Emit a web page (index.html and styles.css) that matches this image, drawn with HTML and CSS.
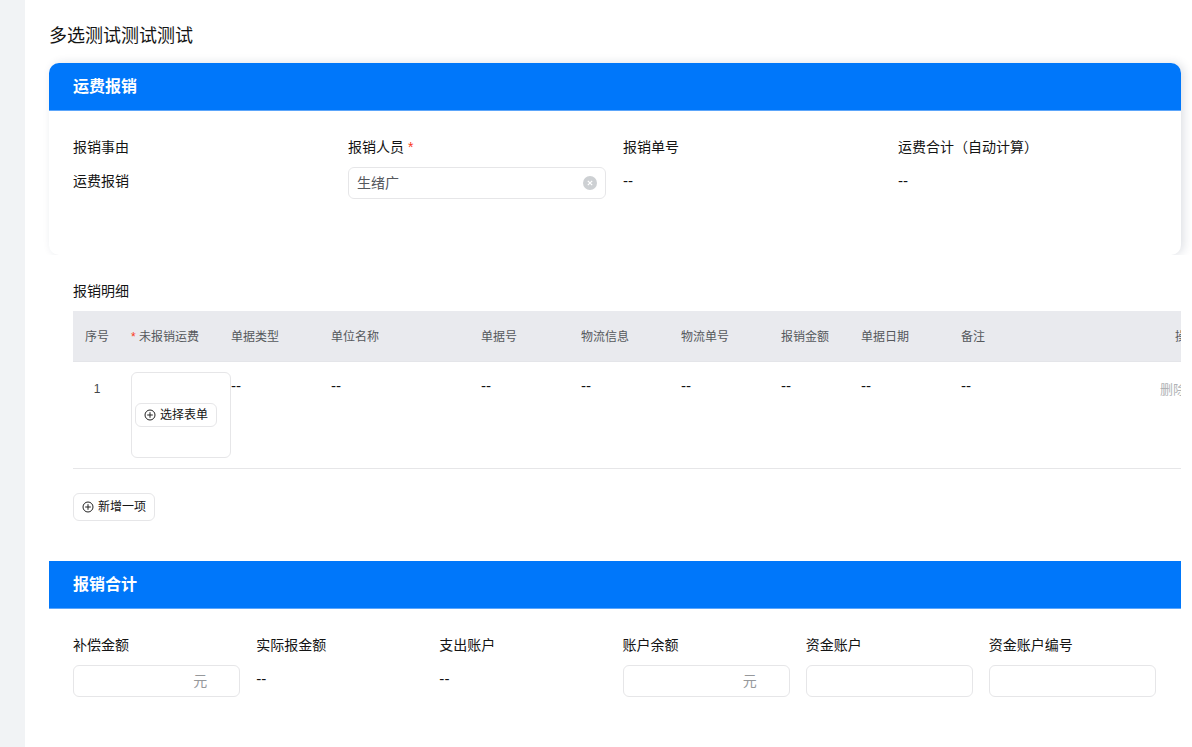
FILE: index.html
```html
<!DOCTYPE html>
<html lang="zh-CN">
<head>
<meta charset="utf-8">
<title>多选测试测试测试</title>
<link rel="stylesheet" href="styles.css">
</head>
<body>
<main class="page">
  <h1 class="page-title">多选测试测试测试</h1>

  <section class="card">
    <h2 class="section-bar">运费报销</h2>
    <div class="fields fields-four">
      <div class="field"><span class="label">报销事由</span><span class="value">运费报销</span></div>
      <div class="field">
        <label class="label" for="person">报销人员 <span class="required">*</span></label>
        <div class="control">
          <input id="person" type="text" value="生绪广">
          <button class="clear" type="button" aria-label="清除">
            <svg viewBox="0 0 14 14" width="14" height="14"><circle cx="7" cy="7" r="7" fill="#cdd0d3"/><path d="M4.8 4.8l4.4 4.4M9.2 4.8l-4.4 4.4" stroke="#fff" stroke-width="1.2"/></svg>
          </button>
        </div>
      </div>
      <div class="field"><span class="label">报销单号</span><span class="value empty">--</span></div>
      <div class="field"><span class="label">运费合计（自动计算）</span><span class="value empty">--</span></div>
    </div>
  </section>

  <section class="details">
    <h3 class="details-title">报销明细</h3>
    <div class="table-scroll">
      <table class="table">
        <colgroup>
          <col class="w-index"><col class="w-form"><col class="w-100"><col class="w-150"><col class="w-100"><col class="w-100"><col class="w-100"><col class="w-80"><col class="w-100"><col class="w-note"><col class="w-80">
        </colgroup>
        <thead>
          <tr>
            <th class="center">序号</th>
            <th class="form-cell"><span class="required">*</span> 未报销运费</th>
            <th>单据类型</th><th>单位名称</th><th>单据号</th><th>物流信息</th><th>物流单号</th><th>报销金额</th><th>单据日期</th><th>备注</th>
            <th class="action-head">操作</th>
          </tr>
        </thead>
        <tbody>
          <tr>
            <td class="center index">1</td>
            <td class="form-cell">
              <div class="picker">
                <button class="button button-small" type="button"><svg class="plus" viewBox="0 0 12 12"><circle cx="6" cy="6" r="5"/><path d="M6 3.2v5.6M3.2 6h5.6"/></svg>选择表单</button>
              </div>
            </td>
            <td class="empty">--</td><td class="empty">--</td><td class="empty">--</td><td class="empty">--</td><td class="empty">--</td><td class="empty">--</td><td class="empty">--</td><td class="empty">--</td>
            <td class="action"><button class="remove" type="button">删除</button></td>
          </tr>
        </tbody>
      </table>
    </div>
    <button class="button" type="button"><svg class="plus" viewBox="0 0 12 12"><circle cx="6" cy="6" r="5"/><path d="M6 3.2v5.6M3.2 6h5.6"/></svg>新增一项</button>
  </section>

  <section class="total">
    <h2 class="section-bar">报销合计</h2>
    <div class="fields fields-six">
      <div class="field"><label class="label" for="compensation">补偿金额</label><div class="control"><input id="compensation" type="text"><span class="unit">元</span></div></div>
      <div class="field"><span class="label">实际报金额</span><span class="value empty">--</span></div>
      <div class="field"><span class="label">支出账户</span><span class="value empty">--</span></div>
      <div class="field"><label class="label" for="balance">账户余额</label><div class="control"><input id="balance" type="text"><span class="unit">元</span></div></div>
      <div class="field"><label class="label" for="account">资金账户</label><div class="control"><input id="account" type="text"></div></div>
      <div class="field"><label class="label" for="account-no">资金账户编号</label><div class="control"><input id="account-no" type="text"></div></div>
    </div>
  </section>
</main>
</body>
</html>
```

FILE: styles.css
```css
* { box-sizing: border-box; }

body {
  margin: 0;
  padding-left: 25px;
  background: #f1f3f5;
  color: #141414;
  font: 14px/20px "Liberation Sans", "Noto Sans CJK SC", sans-serif;
}

h1, h2, h3 { margin: 0; }
input, button { font: inherit; color: inherit; }

.page {
  min-height: 100vh;
  padding: 24px 11px 24px 24px;
  background: #fff;
}

.page-title {
  margin-bottom: 15px;
  font-size: 18px;
  line-height: 24px;
  font-weight: 400;
}

.card {
  min-height: 192px;
  border-radius: 10px;
  background: #fff;
  box-shadow: 3px 0 10px rgba(30, 40, 80, 0.14);
  clip-path: inset(-10px -11px 0 -10px);
  overflow: hidden;
}

.section-bar {
  padding: 1px 24px 0;
  border-bottom: 1px solid #5ca6fb;
  background: #0077fa;
  color: #fff;
  font-size: 16px;
  line-height: 46px;
  font-weight: 700;
}

.fields {
  display: grid;
  gap: 16px;
  padding: 26px 25px 0 24px;
}
.fields-four {
  grid-template-columns: repeat(4, minmax(0, 1fr));
  column-gap: 17px;
}
.fields-six { grid-template-columns: repeat(6, minmax(0, 1fr)); }

.field {
  display: flex;
  flex-direction: column;
  gap: 10px;
}
.label { white-space: nowrap; }
.value { padding-top: 4px; }
.empty { font-family: "DejaVu Sans", sans-serif; }
.required { color: #f93920; }

.control {
  display: flex;
  align-items: center;
  height: 32px;
  border: 1px solid #e6e6e8;
  border-radius: 6px;
  background: #fff;
}
.control input {
  flex: 1;
  min-width: 0;
  padding: 0 8px;
  border: 0;
  outline: 0;
  background: transparent;
  color: #55585c;
}
.clear {
  display: flex;
  margin-right: 8px;
  padding: 0;
  border: 0;
  background: none;
}
.unit {
  margin-right: 32px;
  color: #96989b;
}

.details { padding: 26px 0 40px 24px; }
.details-title {
  margin-bottom: 10px;
  font-size: 14px;
  line-height: 20px;
  font-weight: 400;
}

.table-scroll {
  margin-bottom: 24px;
  overflow-x: auto;
  scrollbar-width: none;
}
.table {
  width: 1158px;
  table-layout: fixed;
  border-collapse: separate;
  border-spacing: 0;
}
.w-index { width: 48px; }
.w-form { width: 110px; }
.w-80 { width: 80px; }
.w-100 { width: 100px; }
.w-150 { width: 150px; }
.w-note { width: 190px; }

.table th {
  height: 51px;
  padding: 2px 0 0;
  border-bottom: 1px solid #e4e5e9;
  background: #e9eaee;
  color: #55585c;
  font-size: 12px;
  font-weight: 400;
  text-align: left;
}
.table td {
  height: 107px;
  padding: 14px 0 0;
  border-bottom: 1px solid #e6e6e8;
  vertical-align: top;
}
.table .center { text-align: center; }
.table .index { padding-top: 17px; color: #44474a; font-size: 12px; }
.table .form-cell { padding-left: 10px; }
.table td.form-cell { padding-top: 10px; }
.table .action-head { padding-left: 24px; }
.table .action { padding: 17px 0 0 9px; }

.picker {
  display: flex;
  align-items: center;
  height: 86px;
  padding: 0 3px;
  border: 1px solid #e6e6e8;
  border-radius: 6px;
}

.button {
  display: flex;
  align-items: center;
  gap: 4px;
  height: 28px;
  padding: 0 8px;
  border: 1px solid #e6e6e8;
  border-radius: 6px;
  background: #fff;
  font-size: 12px;
  white-space: nowrap;
}
.picker .button-small {
  height: 24px;
}
.plus {
  width: 12px;
  height: 12px;
  fill: none;
  stroke: #222;
  stroke-width: 1;
}
.remove {
  padding: 0;
  border: 0;
  background: none;
  color: #b0b2b5;
  font-size: 13px;
}
```
